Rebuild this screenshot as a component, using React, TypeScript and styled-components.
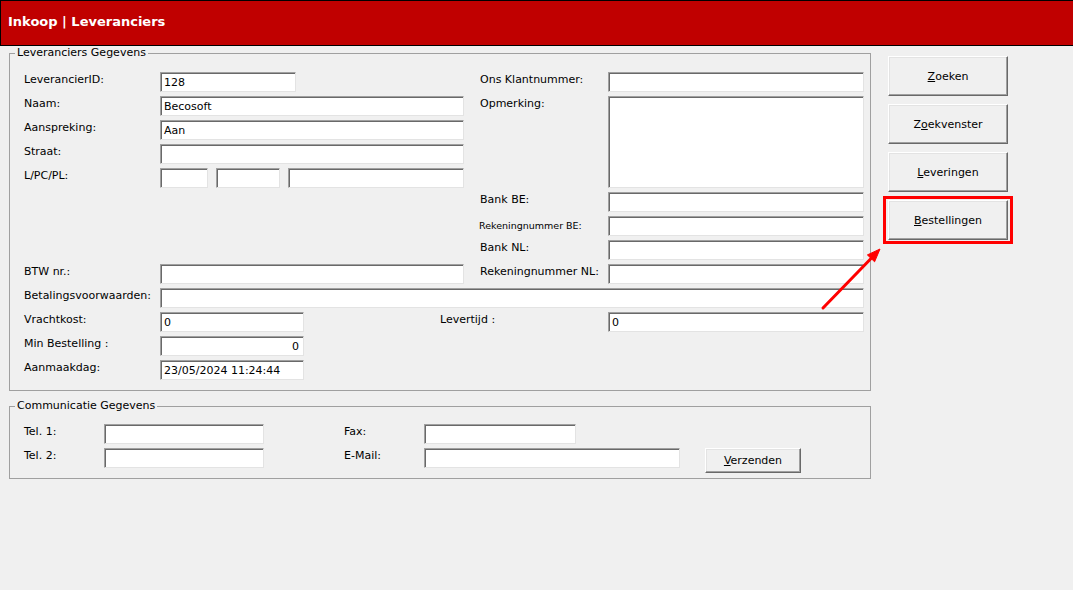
import React, {ReactElement} from 'react';
import styled, {createGlobalStyle} from 'styled-components';

const GlobalStyle = createGlobalStyle`
  body {
    margin: 0;
    background: #f0f0f0;
    font-family: 'DejaVu Sans', 'Liberation Sans', sans-serif;
    font-size: 11px;
    color: #000;
  }
`;

const Page = styled.div`
  position: relative;
  width: 1073px;
  height: 590px;
  overflow: hidden;
`;

const Header = styled.header`
  height: 46px;
  box-sizing: border-box;
  background: #c00000;
  border-top: 1px solid #000;
  border-left: 1px solid #000;
  border-bottom: 1px solid #000;
  padding: 0 0 4px 7px;
  display: flex;
  align-items: center;
  color: #fff;
  font-weight: bold;
  font-size: 13px;
`;

const Body = styled.div`
  display: flex;
  align-items: flex-start;
  gap: 17px;
  padding-left: 9px;
`;

const Forms = styled.div`
  display: flex;
  flex-direction: column;
  gap: 8px;
`;

const GroupBox = styled.fieldset<{$pad: string}>`
  margin: 0;
  width: 862px;
  box-sizing: border-box;
  padding: ${(p) => p.$pad};
  border: 1px solid #a0a0a0;
  min-inline-size: 0;
`;

const Legend = styled.legend`
  margin-left: 5px;
  padding: 0 2px;
  line-height: 14px;
`;

const Grid = styled.div<{$cols: string; $rows: string}>`
  display: grid;
  padding-left: 14px;
  grid-template-columns: ${(p) => p.$cols};
  grid-template-rows: ${(p) => p.$rows};
  row-gap: 4px;
`;

const Label = styled.div<{$col: string; $row: number; $small?: boolean}>`
  grid-column: ${(p) => p.$col};
  grid-row: ${(p) => p.$row};
  white-space: nowrap;
  line-height: 14px;
  padding-top: ${(p) => (p.$small ? '3px' : '1px')};
  margin-left: ${(p) => (p.$small ? '-1px' : '0')};
  font-size: ${(p) => (p.$small ? '9.5px' : '11px')};
`;

const Input = styled.div<{$col?: string; $row?: string | number; $w?: number; $right?: boolean; $tall?: boolean}>`
  grid-column: ${(p) => p.$col || 'auto'};
  grid-row: ${(p) => p.$row || 'auto'};
  width: ${(p) => (p.$w ? `${p.$w}px` : 'auto')};
  flex: ${(p) => (p.$w ? '0 0 auto' : '1')};
  box-sizing: border-box;
  height: ${(p) => (p.$tall ? '100%' : '20px')};
  background: #fff;
  border-top: 1px solid #a0a0a0;
  border-left: 1px solid #a0a0a0;
  border-right: 1px solid #e3e3e3;
  border-bottom: 1px solid #e3e3e3;
  box-shadow: inset 1px 1px 0 #696969;
  padding: 3px 4px 0 3px;
  line-height: 14px;
  text-align: ${(p) => (p.$right ? 'right' : 'left')};
  white-space: nowrap;
  overflow: hidden;
`;

const PostRow = styled.div`
  grid-column: 2 / 5;
  grid-row: 5;
  display: flex;
  gap: 8px;
`;

const ButtonColumn = styled.div`
  margin-top: 10px;
  display: flex;
  flex-direction: column;
  gap: 8px;
  width: 120px;
`;

const Button = styled.button<{$h?: number}>`
  width: 100%;
  height: ${(p) => p.$h || 40}px;
  box-sizing: border-box;
  margin: 0;
  padding: 0;
  background: #f0f0f0;
  border-top: 1px solid #fff;
  border-left: 1px solid #fff;
  border-right: 1px solid #696969;
  border-bottom: 1px solid #696969;
  box-shadow: inset -1px -1px 0 #a0a0a0, inset 1px 1px 0 #e3e3e3;
  font: inherit;
  font-size: 11px;
  color: #000;
  u {
    text-decoration: underline;
  }
`;

const SendButton = styled(Button)`
  grid-column: 7;
  grid-row: 2;
`;

const Highlight = styled.div`
  position: relative;
  &::after {
    content: '';
    position: absolute;
    inset: -4px -5px -4px -5px;
    border: 3px solid #ff0000;
    pointer-events: none;
  }
`;

const Arrow = styled.svg`
  position: absolute;
  left: 816px;
  top: 244px;
  overflow: visible;
`;

export default function App(): ReactElement {
  return (
    <Page>
      <GlobalStyle />
      <Header>Inkoop | Leveranciers</Header>
      <Body>
        <Forms>
          <GroupBox $pad="12px 0 10px 0">
            <Legend>Leveranciers Gegevens</Legend>
            <Grid $cols="136px 144px 136px 24px 16px 128px 256px" $rows="repeat(13, 20px)">
              <Label $col="1" $row={1}>LeverancierID:</Label>
              <Input $col="2 / 4" $row={1} $w={136}>128</Input>
              <Label $col="6" $row={1}>Ons Klantnummer:</Label>
              <Input $col="7" $row={1} />

              <Label $col="1" $row={2}>Naam:</Label>
              <Input $col="2 / 5" $row={2}>Becosoft</Input>
              <Label $col="6" $row={2}>Opmerking:</Label>
              <Input $col="7" $row="2 / 6" $tall />

              <Label $col="1" $row={3}>Aanspreking:</Label>
              <Input $col="2 / 5" $row={3}>Aan</Input>

              <Label $col="1" $row={4}>Straat:</Label>
              <Input $col="2 / 5" $row={4} />

              <Label $col="1" $row={5}>L/PC/PL:</Label>
              <PostRow>
                <Input $w={48} />
                <Input $w={64} />
                <Input />
              </PostRow>

              <Label $col="6" $row={6}>Bank BE:</Label>
              <Input $col="7" $row={6} />
              <Label $col="6" $row={7} $small>Rekeningnummer BE:</Label>
              <Input $col="7" $row={7} />
              <Label $col="6" $row={8}>Bank NL:</Label>
              <Input $col="7" $row={8} />

              <Label $col="1" $row={9}>BTW nr.:</Label>
              <Input $col="2 / 5" $row={9} />
              <Label $col="6" $row={9}>Rekeningnummer NL:</Label>
              <Input $col="7" $row={9} />

              <Label $col="1" $row={10}>Betalingsvoorwaarden:</Label>
              <Input $col="2 / 8" $row={10} />

              <Label $col="1" $row={11}>Vrachtkost:</Label>
              <Input $col="2" $row={11}>0</Input>
              <Label $col="4 / 7" $row={11}>Levertijd :</Label>
              <Input $col="7" $row={11}>0</Input>

              <Label $col="1" $row={12}>Min Bestelling :</Label>
              <Input $col="2" $row={12} $right>0</Input>

              <Label $col="1" $row={13}>Aanmaakdag:</Label>
              <Input $col="2" $row={13}>23/05/2024 11:24:44</Input>
            </Grid>
          </GroupBox>

          <GroupBox $pad="11px 0 5px 0">
            <Legend>Communicatie Gegevens</Legend>
            <Grid $cols="80px 160px 80px 80px 256px 25px 96px" $rows="20px 25px">
              <Label $col="1" $row={1}>Tel. 1:</Label>
              <Input $col="2" $row={1} />
              <Label $col="4" $row={1}>Fax:</Label>
              <Input $col="5" $row={1} $w={152} />

              <Label $col="1" $row={2}>Tel. 2:</Label>
              <Input $col="2" $row={2} />
              <Label $col="4" $row={2}>E-Mail:</Label>
              <Input $col="5" $row={2} />
              <SendButton $h={25}>
                <u>V</u>erzenden
              </SendButton>
            </Grid>
          </GroupBox>
        </Forms>

        <ButtonColumn>
          <Button>
            <u>Z</u>oeken
          </Button>
          <Button>
            Z<u>o</u>ekvenster
          </Button>
          <Button>
            <u>L</u>everingen
          </Button>
          <Highlight>
            <Button>
              <u>B</u>estellingen
            </Button>
          </Highlight>
        </ButtonColumn>
      </Body>

      <Arrow width="70" height="70" viewBox="0 0 70 70">
        <line x1="7" y1="64" x2="56" y2="13.5" stroke="#ff0000" strokeWidth="3" strokeLinecap="round" />
        <polygon points="64,5 58.6,17.8 51.4,10.9" fill="#ff0000" stroke="#ff0000" strokeWidth="1" strokeLinejoin="round" />
      </Arrow>
    </Page>
  );
}
